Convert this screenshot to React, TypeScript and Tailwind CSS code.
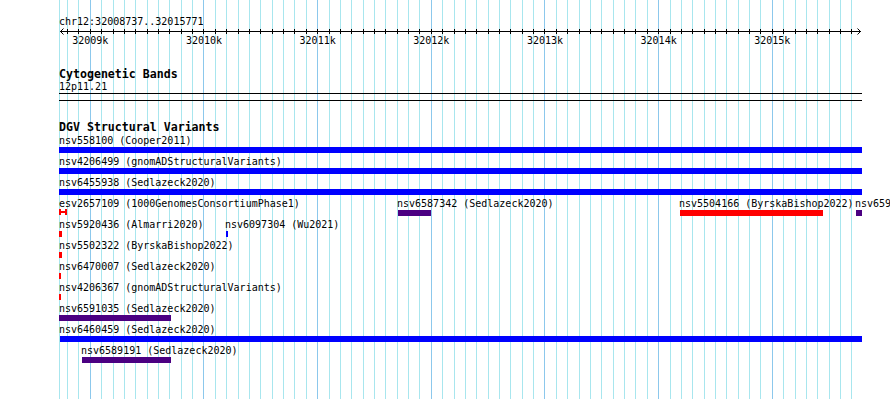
import React from "react";

const START = 32008737;
const X0 = 60.4;
const K = 0.11367;
const px = (bp: number) => X0 + (bp - START) * K;

const BLUE = "#0000ff";
const RED = "#ff0000";
const INDIGO = "#4b0082";

type Feature = { label: string; lx: number; x: number; w: number; color: string; cap?: boolean };

const rows: Feature[][] = [
  [{ label: "nsv558100 (Cooper2011)", lx: 59, x: 59, w: 803, color: BLUE }],
  [{ label: "nsv4206499 (gnomADStructuralVariants)", lx: 59, x: 59, w: 803, color: BLUE }],
  [{ label: "nsv6455938 (Sedlazeck2020)", lx: 59, x: 59, w: 803, color: BLUE }],
  [
    { label: "esv2657109 (1000GenomesConsortiumPhase1)", lx: 59, x: 59, w: 8, color: RED, cap: true },
    { label: "nsv6587342 (Sedlazeck2020)", lx: 397, x: 398, w: 33, color: INDIGO },
    { label: "nsv5504166 (ByrskaBishop2022)", lx: 679, x: 680, w: 143, color: RED },
    { label: "nsv659", lx: 855, x: 856, w: 6, color: INDIGO },
  ],
  [
    { label: "nsv5920436 (Almarri2020)", lx: 59, x: 59, w: 3, color: RED },
    { label: "nsv6097304 (Wu2021)", lx: 225, x: 226, w: 2, color: BLUE },
  ],
  [{ label: "nsv5502322 (ByrskaBishop2022)", lx: 59, x: 59, w: 3, color: RED }],
  [{ label: "nsv6470007 (Sedlazeck2020)", lx: 59, x: 59, w: 2, color: RED }],
  [{ label: "nsv4206367 (gnomADStructuralVariants)", lx: 59, x: 59, w: 2, color: RED }],
  [{ label: "nsv6591035 (Sedlazeck2020)", lx: 59, x: 59, w: 112, color: INDIGO }],
  [{ label: "nsv6460459 (Sedlazeck2020)", lx: 59, x: 60, w: 802, color: BLUE }],
  [{ label: "nsv6589191 (Sedlazeck2020)", lx: 81, x: 82, w: 89, color: INDIGO }],
];

const ticks: { x: number; major: boolean }[] = [];
for (let bp = 32008800; bp <= 32015700; bp += 100) {
  ticks.push({ x: Math.floor(px(bp)), major: bp % 1000 === 0 });
}
const kbLabels = ["32009k", "32010k", "32011k", "32012k", "32013k", "32014k", "32015k"];

// background grid, drawn like the original canvas
function Grid() {
  return (
    <svg className="absolute inset-0" width={890} height={399}>
      <rect x={59} y={0} width={1} height={399} fill="#a8e6ee" />
      {ticks.map((t) => (
        <rect key={t.x} x={t.x} y={0} width={1} height={399} fill={t.major ? "#8cc8ec" : "#a8e6ee"} />
      ))}
    </svg>
  );
}

function Axis() {
  return (
    <div className="flex flex-col">
      <svg className="overflow-visible" width={890} height={6}>
        <rect x={60} y={3} width={801} height={1} fill="#000" />
        {ticks.map((t) => (
          <rect key={t.x} x={t.x} y={1} width={1} height={5} fill="#000" />
        ))}
        <path d="M63.5 0.5 L60.5 3.5 L63.5 6.5" fill="none" stroke="#000" strokeWidth={1} />
        <path d="M857.5 0.5 L860.5 3.5 L857.5 6.5" fill="none" stroke="#000" strokeWidth={1} />
      </svg>
      <div className="flex pl-[33.5px] leading-[13px]">
        {kbLabels.map((l) => (
          <div key={l} className="w-[113.67px] text-center">
            {l}
          </div>
        ))}
      </div>
    </div>
  );
}

function Glyph({ f }: { f: Feature }) {
  if (f.cap) {
    return (
      <div className="flex h-[6px] -mt-[1px]" style={{ width: f.w, marginLeft: f.x - f.lx }}>
        <div className="w-[2px] h-full" style={{ background: f.color }} />
        <div className="flex-1 flex items-center">
          <div className="w-full h-[2px]" style={{ background: f.color }} />
        </div>
        <div className="w-[2px] h-full" style={{ background: f.color }} />
      </div>
    );
  }
  return <div className="h-[6px]" style={{ width: f.w, marginLeft: f.x - f.lx, background: f.color }} />;
}

function Row({ feats }: { feats: Feature[] }) {
  return (
    <div className="relative h-[21px]">
      {feats.map((f) => (
        <div key={f.label} className="absolute top-0 flex flex-col items-start" style={{ left: f.lx }}>
          <span className="leading-[13px] whitespace-nowrap">{f.label}</span>
          <Glyph f={f} />
        </div>
      ))}
    </div>
  );
}

export default function App() {
  return (
    <div className="relative w-[890px] h-[399px] overflow-hidden bg-white text-black text-[10px] font-['DejaVu_Sans_Mono',monospace]">
      <Grid />

      <div className="relative flex flex-col pt-[15px]">
        <div className="pl-[59px] leading-[13px]">chr12:32008737..32015771</div>
        <Axis />

        <div className="mt-[21px] pl-[59px] leading-[12px] text-[11.6px] font-bold">Cytogenetic Bands</div>
        <div className="pl-[59px] leading-[13px]">12p11.21</div>
        <div className="ml-[59px] w-[803px] h-px bg-black" />
        <div className="ml-[59px] mt-[6px] w-[803px] h-px bg-black" />

        <div className="mt-[20px] pl-[59px] leading-[13px] text-[11.6px] font-bold">DGV Structural Variants</div>
        {rows.map((r, i) => (
          <Row key={i} feats={r} />
        ))}
      </div>
    </div>
  );
}
